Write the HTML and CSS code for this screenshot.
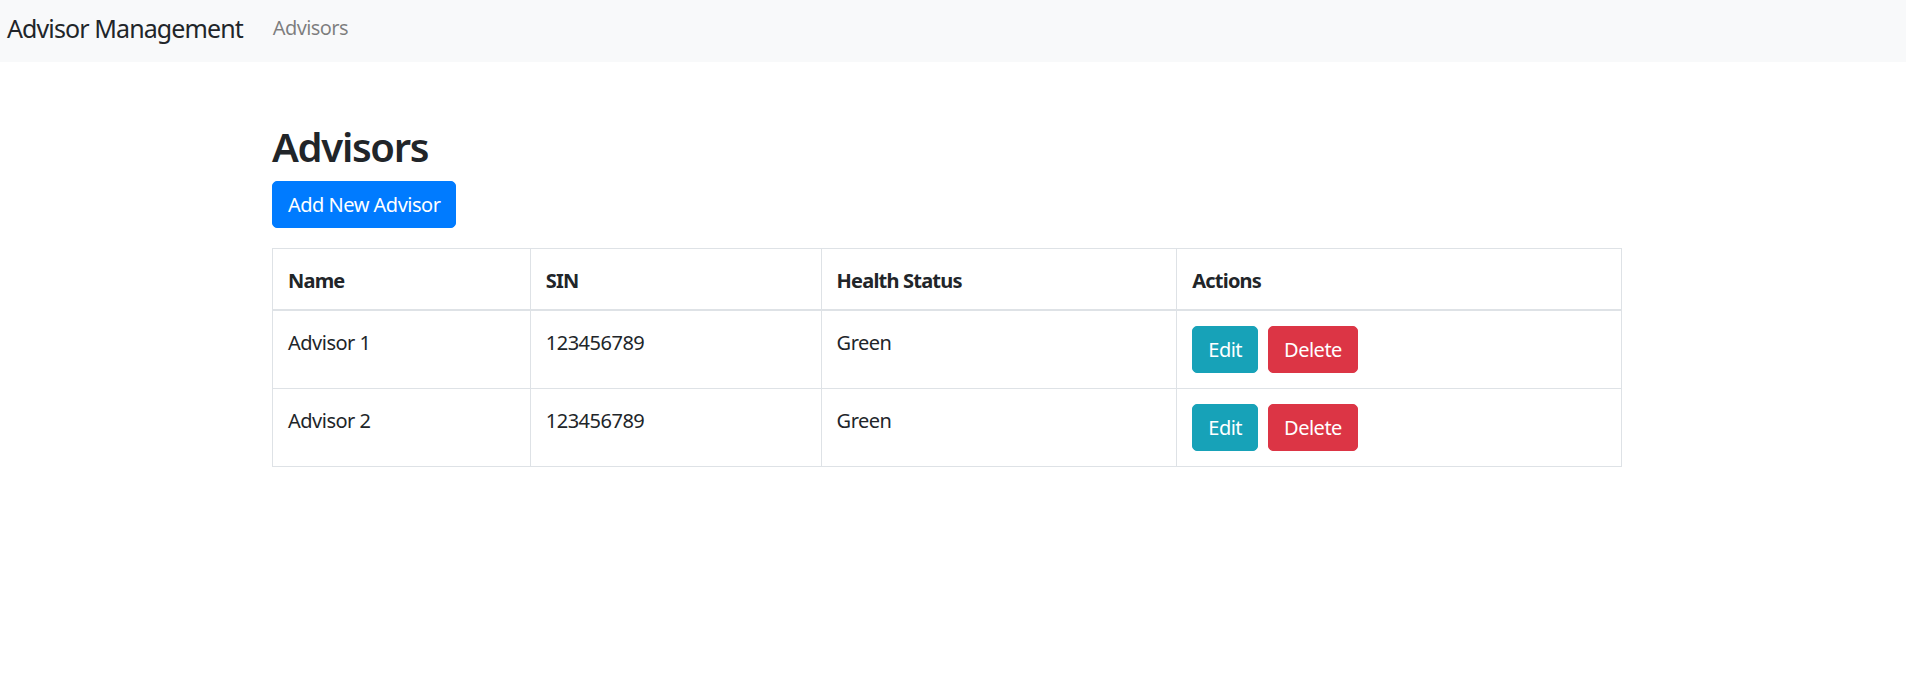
FILE: index.html
```html
<!DOCTYPE html>
<html lang="en">
<head>
<meta charset="utf-8">
<title>Advisor Management</title>
<link rel="stylesheet" href="styles.css">
</head>
<body>
<nav class="navbar">
  <a class="brand" href="#">Advisor Management</a>
  <a class="nav-link" href="#">Advisors</a>
</nav>
<main class="container">
  <h1 class="title">Advisors</h1>
  <button class="btn btn-primary">Add New Advisor</button>
  <table class="table">
    <thead>
      <tr>
        <th class="col-name">Name</th>
        <th class="col-sin">SIN</th>
        <th class="col-health">Health Status</th>
        <th class="col-actions">Actions</th>
      </tr>
    </thead>
    <tbody>
      <tr>
        <td>Advisor 1</td>
        <td>123456789</td>
        <td>Green</td>
        <td class="cell-actions"><div class="actions"><button class="btn btn-info">Edit</button><button class="btn btn-danger">Delete</button></div></td>
      </tr>
      <tr>
        <td>Advisor 2</td>
        <td>123456789</td>
        <td>Green</td>
        <td class="cell-actions"><div class="actions"><button class="btn btn-info">Edit</button><button class="btn btn-danger">Delete</button></div></td>
      </tr>
    </tbody>
  </table>
</main>
</body>
</html>
```
FILE: styles.css
```css
* { box-sizing: border-box; }
html, body {
  margin: 0;
  padding: 0;
  background: #fff;
  color: #212529;
  font-family: "Noto Sans", "Open Sans", sans-serif;
  font-size: 20px;
  line-height: 30px;
}
.navbar {
  height: 62px;
  background: #f8f9fa;
  display: flex;
  align-items: center;
  padding: 0 0 6px 7px;
}
.brand {
  font-size: 25px;
  line-height: 37px;
  color: #212529;
  text-decoration: none;
  margin-right: 20px;
  letter-spacing: -0.9px;
}
.nav-link {
  color: rgba(0, 0, 0, 0.5);
  text-decoration: none;
  padding: 0 10px;
  font-size: 20px;
  letter-spacing: -0.6px;
}
.container {
  width: 1350px;
  margin-left: 272px;
  padding-top: 61px;
}
.title {
  font-size: 40px;
  line-height: 48px;
  font-weight: 600;
  margin: 0 0 10px 0;
  letter-spacing: -1.3px;
}
.btn {
  display: inline-block;
  font-family: inherit;
  font-size: 20px;
  line-height: 30px;
  padding: 7.5px 15px;
  border: 1px solid transparent;
  border-radius: 5px;
  color: #fff;
  cursor: pointer;
  letter-spacing: -0.5px;
}
.btn-primary { background: #007bff; border-color: #007bff; }
.btn-info { background: #17a2b8; border-color: #17a2b8; }
.btn-danger { background: #dc3545; border-color: #dc3545; }
.table {
  width: 1350px;
  margin-top: 20px;
  border-collapse: collapse;
  border: 1px solid #dee2e6;
}
.table th, .table td {
  border: 1px solid #dee2e6;
  padding: 17px 15px 13px;
  text-align: left;
  vertical-align: top;
  letter-spacing: -0.5px;
}
.table th {
  font-weight: 700;
  vertical-align: bottom;
  border-bottom-width: 2px;
  letter-spacing: -0.8px;
}
.table td.cell-actions {
  padding: 15px;
}
.col-name { width: 258px; }
.col-sin { width: 291px; }
.col-health { width: 356px; }
.col-actions { width: 445px; }
.actions {
  display: flex;
  gap: 10px;
}
```
